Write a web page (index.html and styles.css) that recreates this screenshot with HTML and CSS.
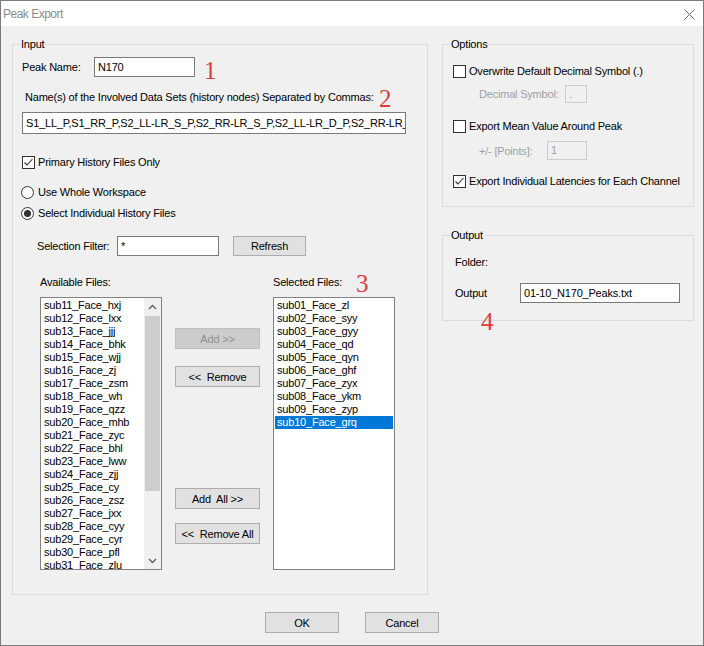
FILE: index.html
```html
<!DOCTYPE html>
<html>
<head>
<meta charset="utf-8">
<title>Peak Export</title>
<link rel="stylesheet" href="styles.css">
</head>
<body>
<div class="window">
  <div class="titlebar">
    <span class="title">Peak Export</span>
    <svg class="close" width="11" height="11" viewBox="0 0 11 11"><path d="M0.5 0.5 L10.5 10.5 M10.5 0.5 L0.5 10.5" stroke="#6a6a6a" stroke-width="1" fill="none"/></svg>
  </div>
  <div class="content">
    <div class="main">
      <div class="group group-input">
        <div class="group-title">Input</div>
        <div class="row row-peak">
          <span class="lbl lbl-peak">Peak Name:</span>
          <div class="field field-peak">N170</div>
        </div>
        <div class="names-label">Name(s) of the Involved Data Sets (history nodes) Separated by Commas:</div>
        <div class="field field-names">S1_LL_P,S1_RR_P,S2_LL-LR_S_P,S2_RR-LR_S_P,S2_LL-LR_D_P,S2_RR-LR_D_P</div>
        <div class="check-row row-primary">
          <span class="cb"><svg width="11" height="11" viewBox="0 0 11 11"><path d="M1.5 5.5 L4 8 L9.5 2" stroke="#333" stroke-width="1.1" fill="none"/></svg></span>
          <span>Primary History Files Only</span>
        </div>
        <div class="radio-row row-r1"><span class="rb"></span><span>Use Whole Workspace</span></div>
        <div class="radio-row row-r2"><span class="rb on"></span><span>Select Individual History Files</span></div>
        <div class="row row-filter">
          <span class="lbl lbl-filter">Selection Filter:</span>
          <div class="field field-filter">*</div>
          <div class="btn btn-refresh">Refresh</div>
        </div>
        <div class="files">
          <div class="files-label">Available Files:</div>
          <div></div>
          <div class="files-label">Selected Files:</div>
          <div class="list list-avail">
            <div class="items">
              <div class="item">sub11_Face_hxj</div>
              <div class="item">sub12_Face_lxx</div>
              <div class="item">sub13_Face_jjj</div>
              <div class="item">sub14_Face_bhk</div>
              <div class="item">sub15_Face_wjj</div>
              <div class="item">sub16_Face_zj</div>
              <div class="item">sub17_Face_zsm</div>
              <div class="item">sub18_Face_wh</div>
              <div class="item">sub19_Face_qzz</div>
              <div class="item">sub20_Face_mhb</div>
              <div class="item">sub21_Face_zyc</div>
              <div class="item">sub22_Face_bhl</div>
              <div class="item">sub23_Face_lww</div>
              <div class="item">sub24_Face_zjj</div>
              <div class="item">sub25_Face_cy</div>
              <div class="item">sub26_Face_zsz</div>
              <div class="item">sub27_Face_jxx</div>
              <div class="item">sub28_Face_cyy</div>
              <div class="item">sub29_Face_cyr</div>
              <div class="item">sub30_Face_pfl</div>
              <div class="item">sub31_Face_zlu</div>
            </div>
            <div class="scrollbar">
              <div class="sb-arrow"><svg width="9" height="6" viewBox="0 0 9 6"><path d="M1 5 L4.5 1.5 L8 5" stroke="#606060" stroke-width="1.4" fill="none"/></svg></div>
              <div class="sb-track"><div class="sb-thumb"></div></div>
              <div class="sb-arrow"><svg width="9" height="6" viewBox="0 0 9 6"><path d="M1 1 L4.5 4.5 L8 1" stroke="#606060" stroke-width="1.4" fill="none"/></svg></div>
            </div>
          </div>
          <div class="mid">
            <div class="btn btn-mid btn-add disabled">Add &gt;&gt;</div>
            <div class="btn btn-mid btn-remove">&lt;&lt;&nbsp; Remove</div>
            <div class="btn btn-mid btn-addall">Add&nbsp; All &gt;&gt;</div>
            <div class="btn btn-mid btn-removeall">&lt;&lt;&nbsp; Remove All</div>
          </div>
          <div class="list list-sel">
            <div class="items">
              <div class="item">sub01_Face_zl</div>
              <div class="item">sub02_Face_syy</div>
              <div class="item">sub03_Face_gyy</div>
              <div class="item">sub04_Face_qd</div>
              <div class="item">sub05_Face_qyn</div>
              <div class="item">sub06_Face_ghf</div>
              <div class="item">sub07_Face_zyx</div>
              <div class="item">sub08_Face_ykm</div>
              <div class="item">sub09_Face_zyp</div>
              <div class="item selected">sub10_Face_grq</div>
            </div>
          </div>
        </div>
        <span class="mark m1">1</span>
        <span class="mark m2">2</span>
        <span class="mark m3">3</span>
      </div>
      <div class="side">
        <div class="group group-options">
          <div class="group-title">Options</div>
          <div class="check-row opt-1">
            <span class="cb"></span>
            <span>Overwrite Default Decimal Symbol (.)</span>
          </div>
          <div class="row sub-row dec-row">
            <span class="lbl disabled-text lbl-dec">Decimal Symbol:</span>
            <div class="field disabled-field field-dec">.</div>
          </div>
          <div class="check-row opt-2">
            <span class="cb"></span>
            <span>Export Mean Value Around Peak</span>
          </div>
          <div class="row sub-row pts-row">
            <span class="lbl disabled-text lbl-pts">+/- [Points]:</span>
            <div class="field disabled-field field-pts">1</div>
          </div>
          <div class="check-row opt-3">
            <span class="cb"><svg width="11" height="11" viewBox="0 0 11 11"><path d="M1.5 5.5 L4 8 L9.5 2" stroke="#333" stroke-width="1.1" fill="none"/></svg></span>
            <span>Export Individual Latencies for Each Channel</span>
          </div>
        </div>
        <div class="group group-output">
          <div class="group-title">Output</div>
          <div class="folder-label">Folder:</div>
          <div class="row out-row">
            <span class="lbl lbl-out">Output</span>
            <div class="field field-out">01-10_N170_Peaks.txt</div>
          </div>
          <span class="mark m4">4</span>
        </div>
      </div>
    </div>
    <div class="footer">
      <div class="btn btn-foot">OK</div>
      <div class="btn btn-foot">Cancel</div>
    </div>
  </div>
</div>
</body>
</html>
```

FILE: styles.css
```css
html, body {
  margin: 0;
  padding: 0;
  background: #f0f0f0;
}
body {
  font-family: "Liberation Sans", Arial, sans-serif;
  font-size: 11px;
  letter-spacing: -0.2px;
  color: #000;
}
.window {
  width: 704px;
  height: 646px;
  box-sizing: border-box;
  border: 1px solid #7a7a7a;
  background: #f0f0f0;
  display: flex;
  flex-direction: column;
}
.titlebar {
  height: 25px;
  flex: none;
  background: #fff;
  display: flex;
  align-items: center;
  justify-content: space-between;
  padding: 0 8px 0 2px;
}
.title {
  color: #8c8c8c;
  font-size: 12px;
  letter-spacing: -0.5px;
  margin-top: 1px;
}
.close { display: block; margin-top: 1px; }
.content {
  flex: 1;
  padding: 18px 0 0 11px;
  display: flex;
  flex-direction: column;
}
.main {
  display: flex;
  gap: 14px;
  align-items: flex-start;
}
.group {
  position: relative;
  box-sizing: border-box;
  border: 1px solid #dcdcdc;
}
.group-title {
  position: absolute;
  top: -7px;
  left: 7px;
  padding: 0 1px;
  line-height: 13px;
  background: #f0f0f0;
}
.group-input {
  width: 416px;
  height: 551px;
  padding: 12px 0 0 9px;
}
.side {
  width: 252px;
  display: flex;
  flex-direction: column;
}
.row {
  display: flex;
  align-items: center;
}
.lbl { flex: none; line-height: 14px; }
.field {
  box-sizing: border-box;
  height: 20px;
  border: 1px solid #7a7a7a;
  background: #fff;
  line-height: 18px;
  padding: 0 3px;
  white-space: nowrap;
  overflow: hidden;
}
.row-peak { height: 20px; }
.lbl-peak { width: 72px; }
.field-peak { width: 101px; }
.names-label {
  margin-top: 13px;
  padding-left: 3px;
  line-height: 14px;
}
.field-names {
  margin-top: 8px;
  width: 384px;
  height: 22px;
  line-height: 20px;
}
.check-row, .radio-row {
  display: flex;
  align-items: center;
  height: 14px;
  line-height: 14px;
}
.cb {
  flex: none;
  box-sizing: border-box;
  width: 13px;
  height: 13px;
  border: 1px solid #333;
  background: #fff;
  margin-right: 3px;
  display: flex;
}
.cb svg { display: block; }
.rb {
  flex: none;
  box-sizing: border-box;
  width: 13px;
  height: 13px;
  border: 1px solid #333;
  border-radius: 50%;
  background: #fff;
  margin-left: -1px;
  margin-right: 4px;
  display: flex;
  align-items: center;
  justify-content: center;
}
.rb.on::after {
  content: "";
  width: 7px;
  height: 7px;
  border-radius: 50%;
  background: #333;
}
.row-primary { margin-top: 21px; }
.row-r1 { margin-top: 16px; }
.row-r2 { margin-top: 7px; }
.row-filter {
  margin-top: 16px;
  padding-left: 15px;
  height: 20px;
}
.lbl-filter { width: 80px; }
.field-filter { width: 102px; }
.btn {
  box-sizing: border-box;
  background: #e1e1e1;
  border: 1px solid #adadad;
  text-align: center;
  white-space: nowrap;
  display: flex;
  align-items: center;
  justify-content: center;
}
.btn-refresh {
  margin-left: 14px;
  width: 73px;
  height: 20px;
}
.files {
  margin-top: 19px;
  margin-left: 18px;
  display: grid;
  grid-template-columns: 122px 85px 122px;
  grid-template-rows: 14px 273px;
  column-gap: 13px;
  row-gap: 8px;
}
.files-label { line-height: 14px; }
.list {
  box-sizing: border-box;
  border: 1px solid #828282;
  background: #fff;
  display: flex;
  overflow: hidden;
}
.items {
  flex: 1;
  padding: 1px;
  overflow: hidden;
  min-width: 0;
}
.item {
  height: 13px;
  line-height: 13px;
  padding-left: 2px;
  white-space: nowrap;
}
.item.selected {
  background: #0078d7;
  color: #fff;
}
.scrollbar {
  flex: none;
  width: 17px;
  background: #f0f0f0;
  display: flex;
  flex-direction: column;
}
.sb-arrow {
  height: 17px;
  flex: none;
  display: flex;
  align-items: center;
  justify-content: center;
}
.sb-track {
  flex: 1;
  padding-top: 1px;
}
.sb-thumb {
  height: 175px;
  margin: 0 1px;
  background: #cdcdcd;
}
.mid {
  display: flex;
  flex-direction: column;
}
.btn-mid { height: 21px; }
.btn-add { margin-top: 31px; }
.btn-remove { margin-top: 17px; }
.btn-addall { margin-top: 101px; }
.btn-removeall { margin-top: 14px; }
.btn.disabled {
  background: #cccccc;
  border-color: #bfbfbf;
  color: #8f8f8f;
}
.mark {
  position: absolute;
  font-family: "Liberation Serif", "Times New Roman", serif;
  font-size: 25px;
  line-height: 25px;
  letter-spacing: 0;
  color: #e03a3a;
}
.m1 { left: 191px; top: 13px; }
.m2 { left: 366px; top: 41px; }
.m3 { left: 343px; top: 226px; }
.m4 { left: 38px; top: 73px; }
.group-options {
  height: 163px;
  padding: 19px 0 0 10px;
}
.opt-1 { }
.sub-row { padding-left: 26px; }
.dec-row { margin-top: 7px; height: 18px; }
.lbl-dec { width: 86px; }
.disabled-text { color: #a0a0a0; }
.disabled-field {
  background: #f0f0f0;
  border-color: #cccccc;
  color: #a0a0a0;
}
.field-dec { width: 22px; height: 18px; line-height: 16px; }
.opt-2 { margin-top: 16px; }
.pts-row { margin-top: 8px; height: 19px; }
.lbl-pts { width: 68px; }
.field-pts { width: 40px; height: 19px; line-height: 17px; }
.opt-3 { margin-top: 14px; }
.group-output {
  margin-top: 28px;
  height: 86px;
  padding: 19px 0 0 12px;
}
.folder-label { line-height: 14px; }
.out-row { margin-top: 14px; height: 20px; }
.lbl-out { width: 65px; }
.field-out { width: 160px; }
.footer {
  margin-top: 17px;
  margin-left: -11px;
  display: flex;
  justify-content: center;
  gap: 26px;
}
.btn-foot {
  width: 74px;
  height: 21px;
}
```
